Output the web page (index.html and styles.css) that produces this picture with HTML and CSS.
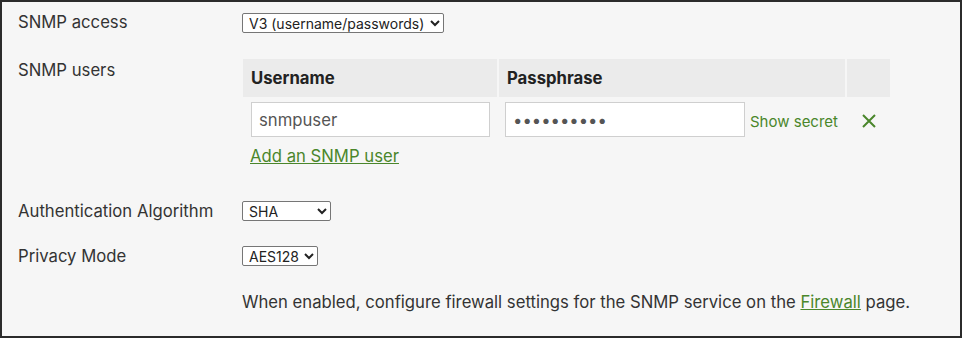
FILE: index.html
```html
<!DOCTYPE html>
<html lang="en">
<head>
  <meta charset="UTF-8">
  <title>SNMP settings</title>
  <link rel="stylesheet" href="styles.css">
</head>
<body>
<div class="panel">
  <div class="row row-access">
    <div class="label">SNMP access</div>
    <div class="field">
      <select class="select">
        <option>V3 (username/passwords)</option>
      </select>
    </div>
  </div>

  <div class="row row-users">
    <div class="label">SNMP users</div>
    <div class="field">
      <div class="users-grid">
        <div class="th">Username</div>
        <div class="th">Passphrase</div>
        <div class="th"></div>

        <div class="td td-user"><input class="text-input" type="text" value="snmpuser"></div>
        <div class="td td-pass">
          <input class="text-input" type="password" value="snmppasswd">
          <a href="#" class="show-secret">Show secret</a>
        </div>
        <div class="td td-remove">
          <svg width="16" height="16" viewBox="0 0 16 16" class="remove-icon">
            <path d="M2 2 L14 14 M14 2 L2 14" stroke="#4a862b" stroke-width="2" fill="none"/>
          </svg>
        </div>
      </div>
      <a href="#" class="add-link">Add an SNMP user</a>
    </div>
  </div>

  <div class="row row-auth">
    <div class="label">Authentication Algorithm</div>
    <div class="field">
      <select class="select select-sha">
        <option>SHA</option>
      </select>
    </div>
  </div>

  <div class="row row-privacy">
    <div class="label">Privacy Mode</div>
    <div class="field">
      <select class="select">
        <option>AES128</option>
      </select>
    </div>
  </div>

  <div class="row row-note">
    <div class="label"></div>
    <div class="field">When enabled, configure firewall settings for the SNMP service on the <a href="#" class="link">Firewall</a> page.</div>
  </div>
</div>
</body>
</html>
```

FILE: styles.css
```css
* { box-sizing: border-box; }
body { margin: 0; font-family: Inter, "Noto Sans", sans-serif; color: #333; }
.panel { width: 962px; height: 338px; border: 2px solid #2b2b2b; background: #f6f6f6; padding: 8px 16px 0 16px; font-size: 16.7px; line-height: 24px; }

.row { display: flex; align-items: flex-start; }
.label { width: 224px; flex-shrink: 0; }
.field { flex: 1; }

.row-access .field, .row-auth .field, .row-privacy .field { display: flex; align-items: center; height: 24px; }
.row-access .field { padding-top: 2px; }
.row-users { margin-top: 24px; }
.row-auth { margin-top: 31px; }
.row-privacy { margin-top: 21px; }
.row-note { margin-top: 22px; }

.select { font-family: Inter, sans-serif; font-size: 14px; color: #222; height: 20px; border: 1px solid #767676; border-radius: 2px; background: #fff; padding: 0 2px; }
.select-sha { width: 89px; }

.users-grid { display: grid; grid-template-columns: 254px 346px 43px; column-gap: 2px; margin-left: 1px; margin-top: 1px; }
.th { background: #ebebeb; height: 38px; padding: 7px 8px; font-weight: 700; color: #222; }
.td { padding-top: 5px; height: 47px; display: flex; align-items: flex-start; }
.td-user { padding-left: 8px; }
.td-pass { padding-left: 6px; }
.td-remove { justify-content: center; padding-top: 16px; }

.text-input { width: 240px; height: 35px; border: 1px solid #cfcfcf; background: #fff; font-family: Inter, sans-serif; font-size: 16.7px; color: #555; padding: 0 7px; border-radius: 0; outline: none; }
.td-user .text-input { width: 239px; }
.show-secret { color: #4a862b; text-decoration: none; margin-left: 5px; margin-top: 2px; line-height: 35px; font-size: 15px; }

.add-link { display: inline-block; margin-left: 8px; color: #4a862b; text-decoration: underline; }
.link { color: #4a862b; text-decoration: underline; }
```
